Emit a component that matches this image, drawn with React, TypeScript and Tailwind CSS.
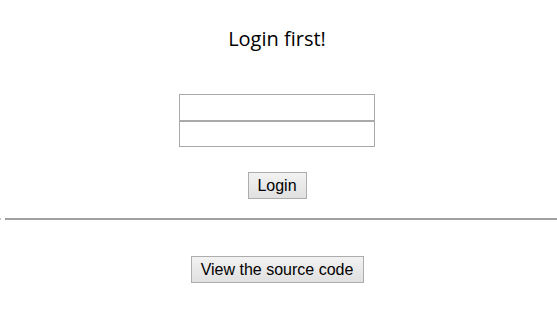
import React from "react";

export default function App() {
  return (
    <div className="w-[557px] h-[316px] bg-white overflow-hidden font-['Liberation_Sans',Arial,sans-serif]">
      <div className="flex flex-col items-center pr-[3px]">
        <h1 className="mt-[26px] text-[20px] leading-[26px] font-normal text-black font-['Open_Sans',sans-serif]">
          Login first!
        </h1>
        <div className="mt-[42px] flex flex-col">
          <input className="w-[196px] h-[27px] border border-[#a9a9a9] bg-white outline-none" />
          <input className="w-[196px] h-[26px] border border-[#a9a9a9] bg-white outline-none" />
        </div>
        <button className="mt-[25px] w-[59px] h-[27px] border border-[#adadad] bg-gradient-to-b from-[#f2f2f2] to-[#e0e0e0] text-[16px] leading-none text-black">
          Login
        </button>
      </div>
      <div className="mt-[19px] flex items-center h-[2px]">
        <div className="w-[1px] h-[2px] bg-[#c8c8c8]" />
        <div className="ml-[4px] flex-1 h-[2px] bg-[#a0a0a0]" />
      </div>
      <div className="mt-[36px] flex justify-center pr-[3px]">
        <button className="w-[173px] h-[27px] border border-[#adadad] bg-gradient-to-b from-[#f2f2f2] to-[#e0e0e0] text-[16px] leading-none text-black">
          View the source code
        </button>
      </div>
    </div>
  );
}
